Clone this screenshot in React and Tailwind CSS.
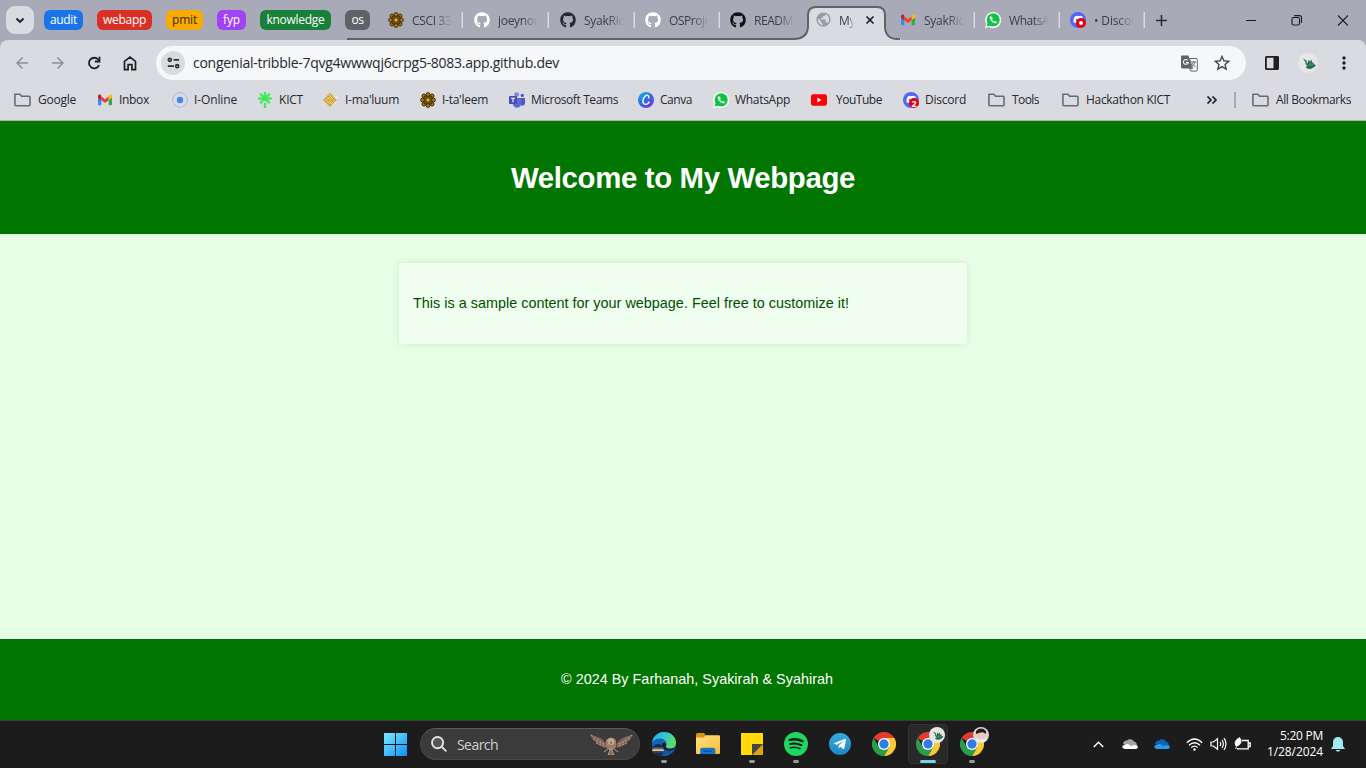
import { useLayoutEffect, useRef } from "react";
import { FaGithub, FaDiscord, FaTelegramPlane } from "react-icons/fa";
import { MdArrowBack, MdArrowForward, MdStarBorder, MdMoreVert, MdPublic } from "react-icons/md";

/* Text run whose tracking is adjusted so that it fills the given width. */
function Fit({ w, children, className = "" }) {
  const ref = useRef(null);
  useLayoutEffect(() => {
    const el = ref.current;
    const fit = () => {
      el.style.letterSpacing = "0px";
      const n = el.textContent.length;
      el.style.letterSpacing = (w - el.getBoundingClientRect().width) / n + "px";
    };
    fit();
    document.fonts?.ready.then(fit);
  }, [w, children]);
  return (
    <span ref={ref} className={"inline-block whitespace-pre " + className}>
      {children}
    </span>
  );
}

const Folder = () => (
  <svg width="17" height="16" viewBox="0 0 17 16" fill="none" stroke="#6a6b6f" strokeWidth="1.6" strokeLinejoin="round">
    <path d="M.9 2.2h5l1.8 2h7.4q.9 0 .9.9v7.7q0 .9-.9.9H1.8q-.9 0-.9-.9z" />
  </svg>
);
const Gmail = () => (
  <svg width="16" height="16" viewBox="0 0 16 16">
    <path d="M1 4v8.500c0 .5.4.8.8.8h2.500V6.500z" fill="#4285f4" />
    <path d="M15 4v8.500c0 .5-.4.8-.8.8h-2.500V6.500z" fill="#34a853" />
    <path d="M4.300 4.300L8 7.200l3.700-2.900v3.900L8 11 4.300 8.200z" fill="#ea4335" />
    <path d="M1 4.200C1 2.600 2.700 2.100 3.800 3l.5.4v4.800L1 5.700z" fill="#c5221f" />
    <path d="M15 4.200c0-1.600-1.700-2.100-2.800-1.200l-.5.4v4.800L15 5.700z" fill="#fbbc04" />
  </svg>
);
const Online = () => (
  <svg width="16" height="16" viewBox="0 0 16 16">
    <circle cx="8" cy="8" r="7.300" fill="none" stroke="#9bb8ec" strokeWidth="1" strokeDasharray="9 1.200" />
    <circle cx="8" cy="8" r="3.200" fill="#4285f4" />
  </svg>
);
const Kict = () => (
  <svg width="16" height="16" viewBox="0 0 16 16" stroke="#43e660" strokeWidth="2.300" fill="none">
    <path d="M8 0v9M8 11v5M1.200 6.500h13.600M3.200 1.800l9.600 9.400M12.800 1.800L3.200 11.200" />
  </svg>
);
const Maluum = () => (
  <svg width="16" height="16" viewBox="0 0 16 16">
    <path d="M9 4l6 1-2 6-5 3z" fill="#ededf0" />
    <path d="M7 .8l7 7.1-7 7.1L0 7.900z" fill="#d6a53c" />
    <path d="M3.500 4.500l3 3M6 3l4 4M2 7l5 5M6 9l3 3M10.500 5.500l-3 3M8.500 3.500L3.500 8.500M12 8l-4 4" stroke="#eedbaa" strokeWidth=".7" fill="none" />
  </svg>
);
const Taleem = () => (
  <svg width="16" height="16" viewBox="0 0 16 16">
    <g fill="#b57d10" stroke="#41300c" strokeWidth="1">
      <circle cx="8" cy="2.600" r="2" /><circle cx="8" cy="13.400" r="2" />
      <circle cx="2.600" cy="8" r="2" /><circle cx="13.400" cy="8" r="2" />
      <circle cx="4" cy="4" r="2" /><circle cx="12" cy="4" r="2" />
      <circle cx="4" cy="12" r="2" /><circle cx="12" cy="12" r="2" />
      <rect x="4.200" y="4.200" width="7.600" height="7.600" fill="#9c6c10" />
      <rect x="6" y="6" width="4" height="4" fill="#f0b429" />
    </g>
  </svg>
);
const Teams = () => (
  <svg width="16" height="16" viewBox="0 0 16 16">
    <circle cx="7.600" cy="2.600" r="2.400" fill="#7b83eb" />
    <circle cx="13.300" cy="3.400" r="1.700" fill="#5059c9" />
    <path d="M11.500 6H16v5a2.500 2.500 0 0 1-4.500 1.600z" fill="#5059c9" />
    <path d="M4 6h8v6c0 5-8 5-8 0z" fill="#6068d4" />
    <rect x="0" y="4" width="8" height="8" rx=".7" fill="#464eb8" />
    <path d="M2 6.200h4M4 6.200V10.300" stroke="#fff" strokeWidth="1.100" />
  </svg>
);
const Canva = () => (
  <svg width="16" height="16" viewBox="0 0 16 16">
    <defs>
      <linearGradient id="canva" x1="0" y1="0" x2=".8" y2="1">
        <stop offset="0" stopColor="#12bfd0" /><stop offset=".5" stopColor="#2a72e4" /><stop offset="1" stopColor="#7d2ae8" />
      </linearGradient>
    </defs>
    <circle cx="8" cy="8" r="8" fill="url(#canva)" />
    <path d="M10.800 5.800c.5-2.800-1.900-3.300-3.800-1.500-2.300 2.300-2.800 6-1 7.500 1.700 1.300 4 .3 5-1.700" stroke="#fff" strokeWidth="1.400" fill="none" strokeLinecap="round" />
  </svg>
);
const Whats = () => (
  <svg width="16" height="16" viewBox="0 0 16 16">
    <path d="M0 16l1.200-4A8 8 0 1 1 4.200 15z" fill="#fff" />
    <circle cx="8.200" cy="7.800" r="6.600" fill="#10c443" />
    <path d="M1.500 14.500l1.200-4 3 3z" fill="#10c443" />
    <path d="M5.900 4.100c-2 1.200-1 3.600.8 5.400 1.800 1.800 4.200 2.800 5.400.8l-2-1.500-1 .9c-1-.4-1.700-1.100-2.100-2.100l.9-1z" fill="#fff" />
  </svg>
);
const YouTube = () => (
  <svg width="16" height="16" viewBox="0 0 16 16">
    <rect x="0" y="2.300" width="16" height="11.400" rx="2.200" fill="#f00" />
    <path d="M6.300 5.600v4.800L10.500 8z" fill="#fff" />
  </svg>
);
const Discord = ({ dot }) => (
  <span className="relative flex h-4 w-4 items-center justify-center rounded-full bg-[#5865f2] text-white">
    <FaDiscord size={11} className="-mt-px" />
    <span className="absolute right-0 bottom-0 flex h-[10px] w-[10px] items-center justify-center rounded-full bg-[#e3000f] font-['Open_Sans',sans-serif] text-[9px] leading-none font-bold">
      {dot ? <span className="h-1 w-1 rounded-full bg-white" /> : "2"}
    </span>
  </span>
);

const groups = [
  ["audit", "w-[39px] bg-[#1a73e8] text-white", 27, "mr-[14px]"],
  ["webapp", "w-[55px] bg-[#d93025] text-white", 43, "mr-[14px]"],
  ["pmit", "w-[37px] bg-[#f9ab00] text-[#3d2c05]", 25, "mr-[14px]"],
  ["fyp", "w-[29px] bg-[#a142f4] text-white", 17, "mr-[14px]"],
  ["knowledge", "w-[71px] bg-[#188038] text-white", 58, "mr-[14px]"],
  ["os", "w-[25px] bg-[#5f6368] text-white", 12, "mr-[18px]"],
];

const tabs = [
  { icon: <Taleem />, text: "CSCI 331", w: 46, slot: "w-[86px]", sep: true },
  { icon: <FaGithub size={16} className="text-white" />, text: "joeynorr", w: 45, slot: "w-[86px]", sep: true },
  { icon: <FaGithub size={16} className="text-[#24292f]" />, text: "SyakRidz", w: 47, slot: "w-[85px]", sep: true },
  { icon: <FaGithub size={16} className="text-white" />, text: "OSProject", w: 51, slot: "w-[85px]", sep: true },
  { icon: <FaGithub size={16} className="text-[#111]" />, text: "README", w: 45, slot: "w-[85px]" },
  { active: true, icon: <MdPublic size={17} className="-mt-px text-[#989a9e]" />, text: "My W", w: 30, slot: "w-[85px]" },
  { icon: <Gmail />, text: "SyakRidz", w: 47, slot: "w-[85px]", sep: true },
  { icon: <Whats />, text: "WhatsApp", w: 54, slot: "w-[85px]", sep: true },
  { icon: <Discord dot />, text: "• Discord", w: 49, slot: "w-[85px]", sep: true },
];

const bookmarks = [
  [<Folder />, "Google", 38, "w-[83px]", "w-6"],
  [<Gmail />, "Inbox", 30, "w-[75px]", "w-[22px]"],
  [<Online />, "I-Online", 43, "w-[85px]", "w-[22px]"],
  [<Kict />, "KICT", 24, "w-[66px]", "w-[22px]"],
  [<Maluum />, "I-ma'luum", 54, "w-[97px]", "w-[22px]"],
  [<Taleem />, "I-ta'leem", 46, "w-[89px]", "w-[22px]"],
  [<Teams />, "Microsoft Teams", 87, "w-[129px]", "w-[22px]"],
  [<Canva />, "Canva", 32, "w-[75px]", "w-[22px]"],
  [<Whats />, "WhatsApp", 55, "w-[98px]", "w-[22px]"],
  [<YouTube />, "YouTube", 46, "w-[92px]", "w-[25px]"],
  [<Discord />, "Discord", 41, "w-[85px]", "w-[22px]"],
  [<Folder />, "Tools", 27, "w-[74px]", "w-6"],
  [<Folder />, "Hackathon KICT", 84, "w-[144px]", "w-6"],
];

function TabStrip() {
  return (
    <div className="relative flex h-10 shrink-0 items-center bg-[#a8abb7] pl-1.5">
      <svg className="absolute top-0 left-[347px]" width="554" height="41" viewBox="0 0 554 41">
        <path d="M449 41v-2c8 0 12-5 12-12V15c0-5 3-8 8-8h61c5 0 8 3 8 8v12c0 7 4 12 12 12h4v2z" fill="#dadbe0" />
        <path d="M0 39H446C456 39 461 35 461 26V15c0-5 3-8 8-8h61c5 0 8 3 8 8v11c0 9 5 13 12 13h3" fill="none" stroke="#5f6368" strokeWidth="2" />
      </svg>
      <div className="mr-[10px] flex h-7 w-7 items-center justify-center rounded-[9px] bg-[#dadbe0]">
        <svg width="10" height="7" viewBox="0 0 10 7" fill="none" stroke="#1f1f1f" strokeWidth="1.900"><path d="M1.500 1.500L5 5l3.500-3.500" /></svg>
      </div>
      {groups.map(([t, c, w, m]) => (
        <div key={t} className={"flex h-5 items-center justify-center rounded-[6px] text-[12px] font-medium " + c + " " + m}>
          <Fit w={w}>{t}</Fit>
        </div>
      ))}
      {tabs.map((t, i) => (
        <div key={i} className={"relative flex h-5 items-center " + t.slot}>
          <span className="w-6 shrink-0">{t.icon}</span>
          <span className={"overflow-hidden pt-[2px] text-[12px] text-[#3b3d43] " + (t.active ? "w-[15px] [mask-image:linear-gradient(to_right,black_60%,transparent)]" : "w-10 [mask-image:linear-gradient(to_right,black_60%,transparent)]")}>
            <Fit w={t.w}>{t.text}</Fit>
          </span>
          {t.active && (
            <svg className="ml-[11px]" width="10" height="10" viewBox="0 0 10 10" stroke="#1f1f1f" strokeWidth="1.700"><path d="M1.500 1.500l7 7M8.500 1.500l-7 7" /></svg>
          )}
          {t.sep && <span className="ml-[10px] h-4 w-px bg-[#d9dbe1] shadow-[-1px_0_0_#bfc2cb]" />}
        </div>
      ))}
      <svg className="ml-px" width="11" height="11" viewBox="0 0 11 11" stroke="#2b2c30" strokeWidth="1.600"><path d="M5.500 0v11M0 5.500h11" /></svg>
      <div className="ml-auto flex items-center pr-[18px]">
        <svg width="103" height="11" viewBox="0 0 103 11" fill="none" stroke="#1b1c1f" strokeWidth="1.100">
          <path d="M1 5.500h10M93 .5l10 10M103 .5l-10 10" />
          <rect x="47" y="2.500" width="7.500" height="7.500" rx="1.500" />
          <path d="M49 .6h5.500q2 0 2 2V8" />
        </svg>
      </div>
    </div>
  );
}

const Dragon = ({ className = "" }) => (
  <svg className={className} viewBox="0 0 20 20">
    <circle cx="10" cy="10" r="10" fill="#e6e7e6" />
    <path d="M5 5.500l3.200 1.800 1.600 3.200.7-3.500 1.700 1.500 1.200-2 .8 3.200 1.600-.5-.4 1.700 2.600 1.100-1.700 2-3.800 2-3.500-.4-1.500-1.800 2.300-.6-2.900-2.700 1.300-.3z" fill="#246b4b" />
    <path d="M7 7.500l3 4M13 9l-1.500 3.500 4-1" stroke="#7fb29a" strokeWidth=".6" fill="none" />
  </svg>
);

function Toolbar() {
  return (
    <div className="bg-[#a8abb7]">
      <div className="relative flex h-[46px] items-center rounded-t-lg bg-[#dadbe0] pl-[13px]">
        <MdArrowBack size={18} className="mr-[18px] text-[#8f9195]" />
        <MdArrowForward size={18} className="mr-[18px] text-[#8f9195]" />
        <svg width="18" height="18" viewBox="0 0 18 18" className="mr-[18px]" fill="none" stroke="#1f1f1f" strokeWidth="1.800">
          <path d="M14.100 11.200A5.300 5.300 0 1 1 13.200 5.500L14.500 7" />
          <path d="M14.500 2.800V7.500H9.800" />
        </svg>
        <svg width="18" height="18" viewBox="0 0 18 18" className="mr-[17px]" fill="none" stroke="#1f1f1f" strokeWidth="1.700">
          <path d="M3.500 7.300L9 3l5.500 4.300v8.400h-3.600v-5H7.100v5H3.500z" />
        </svg>
        <div className="flex h-[34px] w-[1090px] items-center rounded-full bg-[#f5f7f9] pl-[5px]">
          <div className="flex h-6 w-6 items-center justify-center rounded-full bg-[#dadbe0]">
            <svg width="13" height="12" viewBox="0 0 13 12" fill="none" stroke="#303236" strokeWidth="1.700">
              <circle cx="2.800" cy="2.800" r="1.500" /><path d="M6.500 2.800H12M.8 9.200H7" /><circle cx="10.200" cy="9.200" r="1.500" />
            </svg>
          </div>
          <span className="mb-[2px] ml-2 text-[14px] text-[#25282c]"><Fit w={366}>congenial-tribble-7qvg4wwwqj6crpg5-8083.app.github.dev</Fit></span>
          <svg className="ml-auto" width="17" height="17" viewBox="0 0 17 17">
            <path d="M1 .5h6.500L11 13.500H1.500Q0 13.500 0 12V1.500Q0 .5 1 .5z" fill="#5f6368" />
            <path d="M8.500 3.500H15q1.300 0 1.300 1.300v10q0 1.300-1.300 1.300H10l-1.500-2.500h3z" fill="#f5f7f9" stroke="#5f6368" strokeWidth="1" />
            <path d="M6.700 5.400A2.400 2.400 0 1 0 7.200 7.500H5" fill="none" stroke="#f5f7f9" strokeWidth="1.100" />
            <path d="M10.300 7h4.600M12.500 6v1M14 7c-.5 2-2 3.500-3 4.200M11.300 8.200c.8 1.500 2 3 3.200 4" fill="none" stroke="#5f6368" strokeWidth="1" />
          </svg>
          <MdStarBorder size={20} className="mr-[14px] mb-px ml-[14px] text-[#3f4145]" />
        </div>
        <svg className="ml-[19px]" width="14" height="14" viewBox="0 0 14 14"><rect x=".9" y=".9" width="12.200" height="12.200" fill="none" stroke="#1f1f1f" strokeWidth="1.800" rx=".5" /><path d="M8.500 1H13v12H8.500z" fill="#1f1f1f" /></svg>
        <Dragon className="ml-[19px] h-5 w-5" />
        <MdMoreVert size={20} className="ml-4 shrink-0 text-[#1f1f1f]" />
      </div>
      <div className="flex h-[34px] items-center bg-[#dadbe0] pb-[6px] pl-[14px] text-[12px] text-[#25282c]">
        {bookmarks.map(([icon, t, w, slot, iw], i) => (
          <div key={i} className={"flex shrink-0 items-center " + slot}>
            <span className={"shrink-0 " + iw}>{icon}</span>
            <Fit w={w}>{t}</Fit>
          </div>
        ))}
        <svg width="12" height="8" viewBox="0 0 12 8" fill="none" stroke="#1f1f1f" strokeWidth="1.700"><path d="M1.500.5L5 4 1.500 7.500M6.500.5L10 4 6.500 7.500" /></svg>
        <span className="ml-4 h-4 w-[2px] bg-[#a8abb7]" />
        <span className="ml-4 w-6 shrink-0"><Folder /></span>
        <Fit w={75}>All Bookmarks</Fit>
      </div>
      <div className="h-px bg-[#adaeb3]" />
    </div>
  );
}

function Page() {
  return (
    <div className="flex flex-1 flex-col bg-[#e6ffe6] font-['Liberation_Sans',Arial,sans-serif]">
      <header className="flex h-[113px] items-center justify-center bg-[#007500] pt-px">
        <h1 className="text-[29.400px] font-bold text-white"><Fit w={344}>Welcome to My Webpage</Fit></h1>
      </header>
      <main className="flex-1 pt-[29px]">
        <section className="mx-auto h-[81px] w-[568px] rounded-[4px] bg-[#f0fff0] px-[14px] pt-[30px] shadow-[0_0_9px_rgba(0,0,0,0.1)]">
          <p className="text-[14.400px] leading-[20px] text-[#004d00]"><Fit w={436}>This is a sample content for your webpage. Feel free to customize it!</Fit></p>
        </section>
      </main>
      <footer className="flex h-[81px] items-center justify-center bg-[#007500] pl-7">
        <p className="text-[14.400px] text-white"><Fit w={272}>© 2024 By Farhanah, Syakirah &amp; Syahirah</Fit></p>
      </footer>
    </div>
  );
}

const Chrome = () => (
  <svg width="24" height="24" viewBox="0 0 24 24">
    <path d="M12 12L1.600 6A12 12 0 0 1 22.400 6z" fill="#e33b2e" />
    <path d="M12 12V6h10.400A12 12 0 0 1 12 24l5.200-9z" fill="#fcc934" />
    <path d="M12 12l5.200 3L12 24A12 12 0 0 1 1.600 6l5.200 9z" fill="#2a9d4a" />
    <circle cx="12" cy="12" r="6" fill="#fff" />
    <circle cx="12" cy="12" r="4.700" fill="#2f7de9" />
  </svg>
);
const Edge = () => (
  <svg width="24" height="24" viewBox="0 0 24 24">
    <defs>
      <linearGradient id="edge" x1="0" y1="0" x2="1" y2=".4"><stop offset="0" stopColor="#2aa7e8" /><stop offset=".5" stopColor="#35c1dc" /><stop offset="1" stopColor="#5be05c" /></linearGradient>
    </defs>
    <circle cx="12" cy="12" r="12" fill="#1466b5" />
    <path d="M0 11C1 4 6 0 12 0c7 0 12 5 12 10.500 0 4-3 6-6.500 6-3 0-4.500-1-3.500-2.500C16 10 12 6.500 8 6.500c-4 0-7 2-8 4.500z" fill="url(#edge)" />
    <path d="M10 11c-2 6 4 9.500 12 6.500-2 4-6 6.500-10 6.500-5 0-7-8-2-13z" fill="#0e5aa8" />
    <path d="M14 14c1.500-3-2-4.500-4-2-1.500 5 5 8 11 6 2-.8 2-2 1-2-4 1.500-9 .5-8-2z" fill="#14222f" />
    <circle cx="6" cy="18" r="6" fill="#122c4d" />
    <path d="M.8 16.200h10.400" stroke="#8a6f66" strokeWidth="1.300" /><path d="M.2 18.200h11.600" stroke="#e6c3a0" strokeWidth="2" /><path d="M1 20.500h10" stroke="#3d3a44" strokeWidth="1.200" />
  </svg>
);
const Explorer = () => (
  <svg width="24" height="24" viewBox="0 0 24 24">
    <defs><linearGradient id="fold" x1="0" y1="0" x2="1" y2="1"><stop offset="0" stopColor="#ffe187" /><stop offset="1" stopColor="#f8bd30" /></linearGradient></defs>
    <path d="M0 2.500Q0 1 1.500 1H8l2 2.500L8 6H0z" fill="#d49511" />
    <path d="M0 5.500h7.500L10 3.300h13q1 0 1 1V21q0 1-1 1H1q-1 0-1-1z" fill="url(#fold)" />
    <path d="M4.200 22v-4.200q0-2 2-2h11.200q2 0 2 2V22z" fill="#1577c9" />
    <path d="M7.500 19.200h8.500" stroke="#0b559c" strokeWidth="1.400" />
  </svg>
);
const Notes = () => (
  <svg width="24" height="24" viewBox="0 0 24 24"><path d="M1 1h22v11L12 23H1z" fill="#ffd90a" /><path d="M12 12h11v11H12z" fill="#e0a50a" /><path d="M12 12h11L12 23z" fill="#444" /></svg>
);
const Telegram = () => (
  <span className="flex h-[22px] w-[22px] items-center justify-center rounded-full bg-linear-to-b from-[#35aee2] to-[#1d86c5]"><FaTelegramPlane size={14} className="-ml-px text-white" /></span>
);
const Spotify = () => (
  <svg width="24" height="24" viewBox="0 0 24 24" fill="none" stroke="#14201a" strokeLinecap="round">
    <circle cx="12" cy="12" r="12" fill="#1ed760" stroke="none" />
    <path d="M5.500 8c4.500-1.300 9-.9 13.200 1.300" strokeWidth="2.300" /><path d="M6 12c4-1.100 7.700-.7 11.300 1.200" strokeWidth="2" /><path d="M6.500 15.700c3.400-.8 6.500-.5 9.500 1" strokeWidth="1.600" />
  </svg>
);
const Owl = () => (
  <svg width="43" height="21" viewBox="0 0 43 21">
    <path d="M0 0c5 3 10 2 14 7l3 3-1 4C10 12 6 10 5 7 2 5 1 3 0 0z" fill="#806257" />
    <path d="M43 0c-5 3-10 2-14 7l-3 3 1 4c6-2 10-4 11-7 3-2 4-4 5-7z" fill="#806257" />
    <path d="M1 1l13 9M3 5l12 6M6 9l10 4M42 1L29 10M40 5l-12 6M37 9l-10 4" stroke="#c9a796" strokeWidth=".8" strokeDasharray="2 1.500" />
    <path d="M16 6q5-5 10 0v7l-3 3h-4l-3-3z" fill="#9b7b68" />
    <circle cx="21" cy="7.500" r="3.500" fill="#bfa88f" /><path d="M19 6.500h1.200M22 6.500h1.200" stroke="#d8b820" strokeWidth="1.500" /><path d="M21 7.500v2.500" stroke="#57483d" />
    <path d="M18 15l-4 3M24 15l4 3M21 14l-3 7h6z" stroke="#b99b86" strokeWidth="1" fill="#82665a" />
  </svg>
);

const apps = [
  [<Edge />, "idle"], [<Explorer />, ""], [<Notes />, "idle"], [<Spotify />, "idle"], [<Telegram />, ""],
  [<Chrome />, ""], [<Chrome />, "active"], [<Chrome />, "idle2"],
];

function Taskbar() {
  return (
    <div className="flex h-12 shrink-0 items-center border-t border-[#3d3d3d] bg-[#1c1c1c] pb-px pl-[384px] font-['Open_Sans',sans-serif]">
      <svg width="23" height="23" viewBox="0 0 23 23">
        <defs><linearGradient id="win" x1="0" y1="0" x2="1" y2="1"><stop offset="0" stopColor="#7beaff" /><stop offset="1" stopColor="#0e90f5" /></linearGradient></defs>
        <path d="M0 0h11v11H0zM12 0h11v11H12zM0 12h11v11H0zM12 12h11v11H12z" fill="url(#win)" />
      </svg>
      <div className="ml-[13px] flex h-8 w-[220px] items-center rounded-full border border-[#484848] border-t-[#5c5c5c] bg-[#3b3b3b] pl-[10px]">
        <svg width="16" height="16" viewBox="0 0 16 16" fill="#555" stroke="#e2e2e2" strokeWidth="1.900"><circle cx="6.600" cy="6.600" r="5.600" /><path d="M10.800 10.800l4 4" strokeLinecap="round" /></svg>
        <span className="ml-[10px] text-[14px] text-[#d0d0d0]"><Fit w={41}>Search</Fit></span>
        <span className="mr-[6px] ml-auto"><Owl /></span>
      </div>
      <div className="ml-1 flex gap-1">
        {apps.map(([icon, state], i) => (
          <div key={i} className={"relative flex h-10 w-10 items-center justify-center rounded-[4px] " + (state === "active" ? "border border-[#333] bg-[#292929]" : "")}>
            {icon}
            {state === "active" && <Dragon className="absolute top-[2px] right-[2px] h-4 w-4" />}
            {state === "idle2" && (
              <svg className="absolute top-[3px] right-[3px]" width="16" height="16" viewBox="0 0 16 16"><circle cx="8" cy="8" r="8" fill="#d8d5d3" /><path d="M4 5.500Q8 2 12 5.500v4Q8 14 4 9.500z" fill="#f1c8b5" /><path d="M3 7q-1-5 5-5.500 6 .5 5 5.500L10 5.300 6.500 5.800z" fill="#241d1c" /><path d="M3 11q5 3 10 0v3q-5 3-10 0z" fill="#eee" /></svg>
            )}
            {state.startsWith("idle") && <span className="absolute bottom-[1px] left-[17px] h-[3px] w-[6px] rounded-full bg-[#9a9a9a]" />}
            {state === "active" && <span className="absolute bottom-0 left-[11px] h-[3px] w-4 rounded-full bg-[#75d5e0]" />}
          </div>
        ))}
      </div>
      <div className="ml-auto flex items-center pr-[21px]">
        <svg width="11" height="7" viewBox="0 0 11 7" fill="none" stroke="#fff" strokeWidth="1.500"><path d="M.8 6l4.700-4.700L10.200 6" /></svg>
        <svg className="ml-[18px]" width="17" height="12" viewBox="0 0 17 12"><path d="M1 6a4 4 0 0 1 4-3.500A4.500 4.500 0 0 1 12 3.500Q15 4 15 8z" fill="#a5a5a5" /><path d="M2.500 11Q-1 10 1 7.500 3 5.500 6 6l3 1.500 4-.5Q17 7.500 15.500 10q-.5 1-2 1z" fill="#fff" /></svg>
        <svg className="ml-[15px]" width="17" height="12" viewBox="0 0 17 12"><path d="M1 6a4 4 0 0 1 4-3.500A4.500 4.500 0 0 1 12 3.500Q15 4 15 8z" fill="#0a62ba" /><path d="M2.500 11Q-1 10 1 7.500 3 5.500 6 6l3 1.500 4-.5Q17 7.500 15.500 10q-.5 1-2 1z" fill="#249ce9" /></svg>
        <svg className="ml-[15px]" width="17" height="13" viewBox="0 0 17 13" fill="none" stroke="#fff" strokeWidth="1.300"><path d="M.8 4.700Q8.500-2.700 16.200 4.700M3 7.200q5.500-5 11 0M5.300 9.600q3.200-3 6.400 0" /><circle cx="8.500" cy="11.500" r="1.200" fill="#fff" stroke="none" /></svg>
        <svg className="ml-[7px]" width="17" height="14" viewBox="0 0 17 14" fill="none" stroke="#fff" strokeWidth="1.200"><path d="M1 5v4h2.500l4 3.300V1.700L3.500 5zM10 5q1.300 2 0 4M12 3q2.600 4 0 8M14 1.200q4 5.800 0 11.600" /></svg>
        <svg className="ml-[7px]" width="17" height="15" viewBox="0 0 17 15" fill="none" stroke="#fff" strokeWidth="1.300"><path d="M8 3.500h6.200v8.300H3.500V11M14.500 6h1.700v3.500h-1.700" /><path d="M2 9Q-1 4 5.700.5 9 5.500 4.500 8.500zM4.500 4L1.500 12" fill="#fff" strokeWidth=".8" /></svg>
        <div className="ml-[15px] flex w-[57px] flex-col items-end text-[12px] leading-4 text-white">
          <Fit w={43}>5:20 PM</Fit>
          <Fit w={56}>1/28/2024</Fit>
        </div>
        <svg className="ml-2" width="14" height="15" viewBox="0 0 14 15" fill="#9feaf0"><path d="M7 0a5 5 0 0 1 5 5v4l2 3H0l2-3V5a5 5 0 0 1 5-5zM4.500 13h5Q7 16.500 4.500 13z" /></svg>
      </div>
    </div>
  );
}

export default function App() {
  return (
    <div className="flex h-[768px] w-[1366px] flex-col overflow-hidden font-['Open_Sans','Noto_Sans',sans-serif]">
      <TabStrip />
      <Toolbar />
      <Page />
      <Taskbar />
    </div>
  );
}
